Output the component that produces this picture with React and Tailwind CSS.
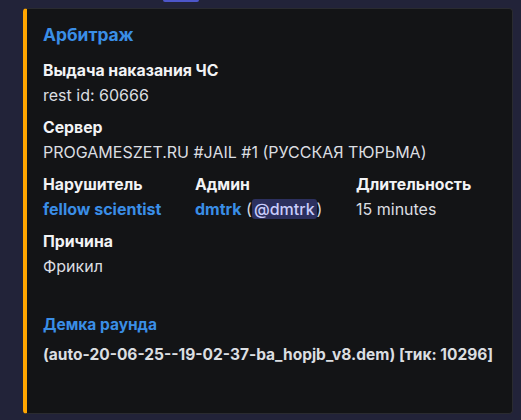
import React from 'react';

const Field = ({ name, children, className = '' }) => (
  <div className={className}>
    <div className="text-[15.8px] leading-[20px] font-bold text-[#f2f3f5]">{name}</div>
    <div className="mt-[4px] text-[16px] leading-[20px] text-[#dbdee1]">{children}</div>
  </div>
);

const App = () => {
  return (
    <div className="w-full h-[420px] bg-[#222339] overflow-hidden flex flex-col" style={{ fontFamily: 'Inter, "Noto Sans", sans-serif' }}>
      <div className="ml-[163px] w-[36px] h-[2px] bg-[#4d56c9] rounded-b-[2px]"></div>
      <div className="mt-[6px] ml-[23px] mr-[8px] h-[406px] bg-[#131416] rounded-[4px] border-l-[4px] border-[#ffa500] border-y border-r border-y-[#2a2b30] border-r-[#2a2b30] pl-[16px] pt-[15px]">
        <div className="text-[17.4px] leading-[22px] font-bold text-[#3a8ee6]">Арбитраж</div>

        <Field name="Выдача наказания ЧС" className="mt-[15px]">rest id: 60666</Field>
        <Field name="Сервер" className="mt-[13px]">PROGAMESZET.RU #JAIL #1 (РУССКАЯ ТЮРЬМА)</Field>

        <div className="mt-[13px] grid grid-cols-[152px_161px_auto]">
          <Field name="Нарушитель">
            <span className="font-bold text-[#3a8ee6]">fellow scientist</span>
          </Field>
          <Field name="Админ">
            <span className="font-bold text-[#3a8ee6]">dmtrk</span>{' '}(
            <span className="bg-[#2c305e] text-[#c9cdfb] font-medium rounded-[3px] px-[2px]">@dmtrk</span>)
          </Field>
          <Field name="Длительность">15 minutes</Field>
        </div>

        <Field name="Причина" className="mt-[13px]">Фрикил</Field>

        <div className="mt-[39px] text-[15.5px] leading-[20px] font-bold text-[#3a8ee6]">Демка раунда</div>
        <div className="mt-[10px] text-[15.5px] leading-[20px] font-bold text-[#dbdee1]">
          (auto-20-06-25--19-02-37-ba_hopjb_v8.dem) [тик: 10296]
        </div>
      </div>
    </div>
  );
};

export default App;
